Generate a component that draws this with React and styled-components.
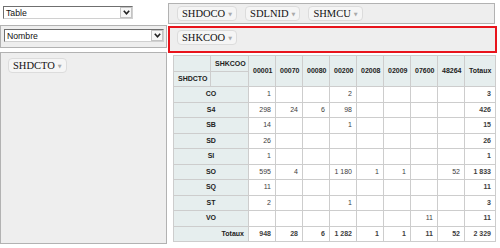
import React from 'react';
import styled, { createGlobalStyle } from 'styled-components';

const GlobalStyle = createGlobalStyle`
	body {
		margin: 0;
		background: #fff;
		font-family: "Liberation Sans", Arial, sans-serif;
	}
`;

const Ui = styled.div`
	display: grid;
	grid-template-columns: 168px 332px;
	grid-template-rows: 25px 27px 196px;
`;

const RendererCell = styled.div`
	padding: 6px 0 0 3px;
`;

const AxisBox = styled.div`
	box-sizing: border-box;
	display: flex;
	align-items: flex-start;
	gap: 8px;
	background: #eee;
	border: ${p => p.$highlight ? '2px solid #e8141c' : '1px solid #b2b2b2'};
	width: ${p => p.$w}px;
	height: ${p => p.$h}px;
	margin-top: ${p => p.$top || 0}px;
	padding: ${p => p.$pad};
`;

const SelectBox = styled.div`
	box-sizing: border-box;
	display: flex;
	align-items: center;
	justify-content: space-between;
	width: ${p => p.$w}px;
	height: 13px;
	background: #fff;
	border: 1px solid;
	border-color: #6f6f6f #d0d0d0 #d0d0d0 #6f6f6f;
	padding-left: 2px;
	font-size: 8.7px;
	color: #111;
`;

const DropButton = styled.span`
	box-sizing: border-box;
	display: flex;
	align-items: center;
	justify-content: center;
	width: 12px;
	height: 11px;
	border: 1px solid #c4c4c4;
	background: #f7f7f7;
`;

const Pill = styled.span`
	box-sizing: border-box;
	display: inline-flex;
	align-items: center;
	height: 15px;
	padding: 0 4px 0 4px;
	background: #f5f5f5;
	border: 1px solid #dcdcdc;
	border-radius: 4px;
	font-family: "Liberation Serif", "Times New Roman", serif;
	font-size: 10.5px;
	color: #111;
	white-space: nowrap;
`;

const Triangle = styled.span`
	margin-left: 3px;
	font-family: "DejaVu Sans", sans-serif;
	font-size: 5px;
	color: #aaa;
`;

const TableCell = styled.div`
	padding: 3px 0 0 5px;
`;

const PivotTable = styled.table`
	border-collapse: collapse;
	table-layout: fixed;
	width: 322px;
	font-family: "Liberation Sans", Arial, sans-serif;
	font-size: 7px;
	line-height: 8px;
`;

const Col = styled.col`
	width: ${p => p.$w}px;
`;

const Row = styled.tr`
	height: ${p => p.$h || 15.5}px;
`;

const Th = styled.th`
	box-sizing: border-box;
	background: #e6eeee;
	border: 1px solid #cdcdcd;
	color: #222;
	font-weight: bold;
	padding: 0 4px;
	text-align: ${p => p.$align || 'center'};
	white-space: nowrap;
	overflow: hidden;
`;

const Td = styled.td`
	box-sizing: border-box;
	background: #fff;
	border: 1px solid #cdcdcd;
	color: #3d3d3d;
	font-weight: ${p => p.$total ? 'bold' : 'normal'};
	padding: 0 4px;
	text-align: right;
	white-space: nowrap;
`;

const Chevron = () => (
	<svg width="7" height="5" viewBox="0 0 7 5">
		<polyline points="0.8,0.8 3.5,3.8 6.2,0.8" fill="none" stroke="#222" strokeWidth="1.6" />
	</svg>
);

const Select = ({ width, value }) => (
	<SelectBox $w={width}>
		<span>{value}</span>
		<DropButton><Chevron /></DropButton>
	</SelectBox>
);

const Attr = ({ name }) => (
	<Pill>{name}<Triangle>▼</Triangle></Pill>
);

const cols = ['00001', '00070', '00080', '00200', '02008', '02009', '07600', '48264'];

const rows = [
	['CO', ['1', '', '', '2', '', '', '', ''], '3'],
	['S4', ['298', '24', '6', '98', '', '', '', ''], '426'],
	['SB', ['14', '', '', '1', '', '', '', ''], '15'],
	['SD', ['26', '', '', '', '', '', '', ''], '26'],
	['SI', ['1', '', '', '', '', '', '', ''], '1'],
	['SO', ['595', '4', '', '1\u00a0180', '1', '1', '', '52'], '1\u00a0833'],
	['SQ', ['11', '', '', '', '', '', '', ''], '11'],
	['ST', ['2', '', '', '1', '', '', '', ''], '3'],
	['VO', ['', '', '', '', '', '', '11', ''], '11'],
];

const totals = ['948', '28', '6', '1\u00a0282', '1', '1', '11', '52'];

const App = () => (
	<>
		<GlobalStyle />
		<Ui>
			<RendererCell>
				<Select width={130} value="Table" />
			</RendererCell>
			<AxisBox $w={327} $h={21} $top={3} $pad="2px 0 0 8px">
				<Attr name="SHDOCO" />
				<Attr name="SDLNID" />
				<Attr name="SHMCU" />
			</AxisBox>
			<AxisBox $w={167} $h={23} $pad="3px 0 0 3px">
				<Select width={160} value="Nombre" />
			</AxisBox>
			<AxisBox $highlight $w={329} $h={27} $top={1} $pad="2px 0 0 7px">
				<Attr name="SHKCOO" />
			</AxisBox>
			<AxisBox $w={167} $h={192} $pad="5px 0 0 7px">
				<Attr name="SHDCTO" />
			</AxisBox>
			<TableCell>
				<PivotTable>
					<colgroup>
						<Col $w={37} />
						<Col $w={38} />
						{cols.map(c => <Col key={c} $w={27} />)}
						<Col $w={31} />
					</colgroup>
					<thead>
						<Row $h={16}>
							<Th />
							<Th>SHKCOO</Th>
							{cols.map(c => <Th key={c} rowSpan={2}>{c}</Th>)}
							<Th rowSpan={2}>Totaux</Th>
						</Row>
						<Row $h={15}>
							<Th>SHDCTO</Th>
							<Th />
						</Row>
					</thead>
					<tbody>
						{rows.map(([label, values, total]) => (
							<Row key={label}>
								<Th colSpan={2}>{label}</Th>
								{values.map((v, i) => <Td key={i}>{v}</Td>)}
								<Td $total>{total}</Td>
							</Row>
						))}
						<Row>
							<Th colSpan={2} $align="right">Totaux</Th>
							{totals.map((v, i) => <Td key={i} $total>{v}</Td>)}
							<Td $total>2&nbsp;329</Td>
						</Row>
					</tbody>
				</PivotTable>
			</TableCell>
		</Ui>
	</>
);

export default App;
